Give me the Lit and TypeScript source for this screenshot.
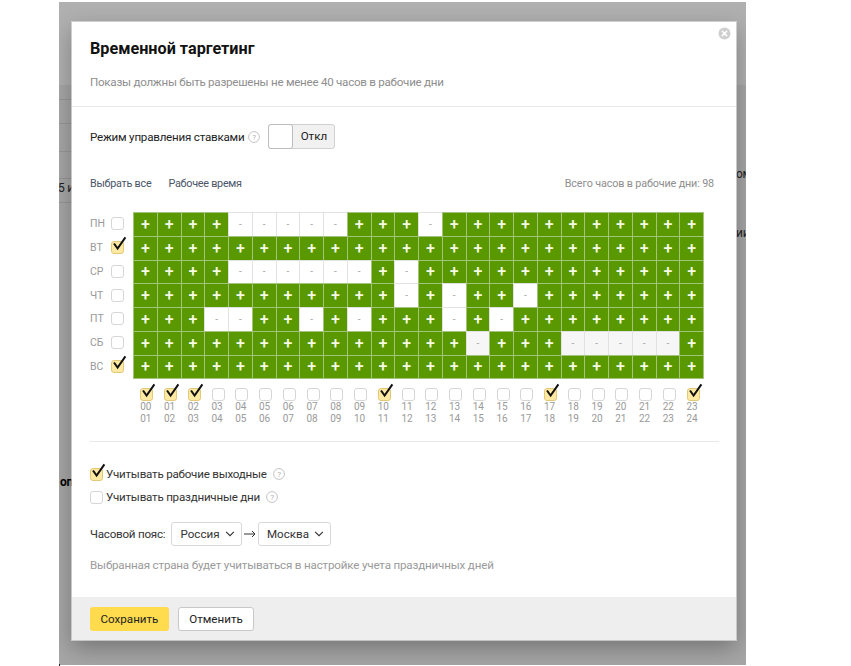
import { LitElement, css, html, svg } from 'lit'
import { customElement } from 'lit/decorators.js'

const DAYS = ['ПН', 'ВТ', 'СР', 'ЧТ', 'ПТ', 'СБ', 'ВС']
const CHECKED_DAYS = ['ВТ', 'ВС']
const CHECKED_HOURS = [0, 1, 2, 10, 17, 23]

// one string per day, 24 hours: + on, - off, o off on a weekend
const SCHEDULE = [
  '++++-----+++-+++++++++++',
  '++++++++++++++++++++++++',
  '++++------+-++++++++++++',
  '+++++++++++-+-++-+++++++',
  '+++--++-+-+++-+-++++++++',
  '++++++++++++++o+++ooooo+',
  '++++++++++++++++++++++++',
]

const pad = (n: number) => String(n).padStart(2, '0')

const tick = svg`<path d="M3 2.5 L6.6 7.6 L14.4 -3.6" fill="none" stroke="#111" stroke-width="2"/>`

@customElement('app-root')
export class AppRoot extends LitElement {
  static styles = css`
    :host {
      display: block;
      width: 851px;
      height: 666px;
      overflow: hidden;
      background: #fff;
      font-family: Roboto, sans-serif;
      font-size: 11.6px;
      letter-spacing: -0.22px;
      color: #222;
    }
    .backdrop {
      position: relative;
      box-sizing: border-box;
      width: 687px;
      height: 663px;
      margin: 2px 0 0 59px;
      padding: 20px 0 0 13px;
      overflow: hidden;
      background: linear-gradient(#b0b0b0 83px, #a6a6a6 83px);
    }
    .line {
      position: absolute;
      left: 0;
      width: 13px;
      height: 1px;
      background: #969696;
    }
    .peek {
      position: absolute;
      color: #222;
      font-size: 12px;
      line-height: 14px;
      white-space: nowrap;
    }
    .peek.bold {
      font-weight: 700;
      color: #000;
    }
    .dot {
      position: absolute;
      left: 59px;
      top: 664px;
      width: 1px;
      height: 2px;
      background: #222;
    }
    .modal {
      position: relative;
      box-sizing: border-box;
      width: 664px;
      height: 618px;
      display: flex;
      flex-direction: column;
      background: #fff;
      box-shadow: 0 0 0 1px rgba(225, 225, 225, 0.7), 0 8px 22px rgba(0, 0, 0, 0.3);
    }
    .close {
      position: absolute;
      top: 5px;
      right: 5px;
      width: 13px;
      height: 13px;
    }
    .head {
      height: 85px;
      box-sizing: border-box;
      padding: 16px 18px 0;
      border-bottom: 1px solid #e8e8e8;
    }
    h1 {
      margin: 0;
      font-size: 16.2px;
      line-height: 22px;
      font-weight: 700;
      letter-spacing: 0;
      color: #111;
    }
    .sub {
      margin-top: 14px;
      line-height: 16px;
      letter-spacing: -0.26px;
      color: #8e8e8e;
    }
    .body {
      flex: 1;
      padding: 17px 17px 0 18px;
    }
    .mode {
      display: flex;
      align-items: center;
      height: 25px;
    }
    .help {
      flex: none;
      width: 12px;
      height: 12px;
      margin-left: 4px;
    }
    .toggle {
      display: flex;
      width: 67px;
      height: 25px;
      margin-left: 8px;
      box-sizing: border-box;
      border: 1px solid #d0d0d0;
      border-radius: 3px;
      background: #f1f1f1;
      letter-spacing: 0;
    }
    .knob {
      width: 23px;
      margin: -1px 0 -1px -1px;
      border: 1px solid #bdbdbd;
      border-radius: 3px;
      background: #fff;
    }
    .toggle span {
      flex: 1;
      text-align: center;
      line-height: 23px;
    }
    .links {
      display: flex;
      gap: 17px;
      margin-top: 26px;
      height: 18px;
      font-size: 10.8px;
      letter-spacing: -0.25px;
      line-height: 18px;
      color: #4a5568;
    }
    .total {
      margin-left: auto;
      margin-right: 5px;
      letter-spacing: -0.15px;
      color: #8e8e8e;
    }
    .table {
      display: grid;
      grid-template-columns: 43px repeat(24, 23.75px);
      margin-top: 19px;
      letter-spacing: 0;
    }
    .day {
      display: flex;
      align-items: center;
      justify-content: space-between;
      padding-right: 9px;
      font-size: 10.5px;
      color: #9a9a9a;
    }
    .cell {
      box-sizing: border-box;
      height: 24.75px;
      display: flex;
      align-items: center;
      justify-content: center;
      border: 1px solid #e2e2e2;
      margin: 0 -1px -1px 0;
      font-size: 10px;
      color: #a8a8a8;
      background: #fff;
    }
    .cell.on {
      background: #5a9800;
      border-color: #a3c47a;
      color: #f6fbe6;
      font-size: 16px;
      font-weight: 500;
    }
    .cell.rest {
      background: #f6f6f6;
    }
    .hour {
      display: flex;
      flex-direction: column;
      align-items: center;
      padding: 10px 0 0 2px;
      font-size: 10px;
      line-height: 11.7px;
      color: #9a9a9a;
    }
    .hour .box {
      margin-left: 2px;
    }
    .box {
      flex: none;
      position: relative;
      box-sizing: border-box;
      display: block;
      width: 13px;
      height: 13px;
      border: 1px solid #d6d6d6;
      border-radius: 3px;
      background: #fff;
    }
    .box.checked {
      background: #ffe9a3;
      border-color: #e3c878;
    }
    .box svg {
      position: absolute;
      left: -1px;
      top: -1px;
      width: 13px;
      height: 13px;
      overflow: visible;
    }
    hr {
      margin: 16px 0 0;
      border: 0;
      border-top: 1px solid #e8e8e8;
    }
    .opts {
      display: flex;
      flex-direction: column;
      gap: 6px;
      margin-top: 24px;
    }
    .opt {
      display: flex;
      align-items: center;
      gap: 3px;
      height: 17px;
      line-height: 17px;
      color: #333;
    }
    .opt .help {
      margin-left: 3px;
    }
    .zone {
      display: flex;
      align-items: center;
      height: 24px;
      margin-top: 16px;
      color: #333;
    }
    .zone-label {
      width: 81px;
      white-space: nowrap;
    }
    .select {
      display: flex;
      align-items: center;
      justify-content: center;
      gap: 5px;
      box-sizing: border-box;
      height: 24px;
      padding-left: 2px;
      border: 1px solid #d8d8d8;
      border-radius: 3px;
      background: #fff;
      letter-spacing: 0;
    }
    .select svg {
      width: 10px;
      height: 6px;
    }
    .zone .arrow {
      width: 12px;
      height: 8px;
      margin: 0 2px;
    }
    .hint {
      margin-top: 11px;
      line-height: 16px;
      letter-spacing: -0.17px;
      color: #9a9a9a;
    }
    .foot {
      height: 43px;
      box-sizing: border-box;
      display: flex;
      align-items: center;
      gap: 9px;
      padding: 0 18px;
      background: #eeeeee;
    }
    button {
      height: 24px;
      padding: 0;
      box-sizing: border-box;
      border-radius: 3px;
      font: inherit;
      letter-spacing: 0;
      color: #222;
    }
    .save {
      width: 79px;
      border: 0;
      background: #ffdb4d;
    }
    .cancel {
      width: 76px;
      border: 1px solid #c8c8c8;
      background: #fff;
    }
  `

  private box(checked: boolean) {
    return html`<span class="box ${checked ? 'checked' : ''}">
      ${checked ? html`<svg viewBox="0 0 13 13">${tick}</svg>` : ''}
    </span>`
  }

  private help() {
    return html`<svg class="help" viewBox="0 0 12 12">
      <circle cx="6" cy="6" r="5.4" fill="none" stroke="#c4c4c4" />
      <text x="6" y="8.8" text-anchor="middle" font-size="8" fill="#b0b0b0">?</text>
    </svg>`
  }

  private chevron() {
    return html`<svg viewBox="0 0 11 7"><path d="M1 1 L5.5 5.5 L10 1" fill="none" stroke="#333" stroke-width="1.3" /></svg>`
  }

  protected render() {
    return html`
      <div class="backdrop">
        ${[97, 121, 149, 176, 200].map(y => html`<div class="line" style="top:${y}px"></div>`)}
        <span class="peek" style="left:-1px;top:179px">5 и</span>
        <span class="peek bold" style="left:1px;top:473px">оп</span>
        <span class="peek" style="left:677px;top:165px">ом</span>
        <span class="peek" style="left:677px;top:224px">ии</span>
        <div class="modal">
          <svg class="close" viewBox="0 0 13 13">
            <circle cx="6.5" cy="6.5" r="6" fill="#cfcfcf" />
            <path d="M4 4 L9 9 M9 4 L4 9" stroke="#fff" stroke-width="1.6" />
          </svg>
          <div class="head">
            <h1>Временной таргетинг</h1>
            <div class="sub">Показы должны быть разрешены не менее 40 часов в рабочие дни</div>
          </div>
          <div class="body">
            <div class="mode">
              Режим управления ставками ${this.help()}
              <div class="toggle"><div class="knob"></div><span>Откл</span></div>
            </div>
            <div class="links">
              <span>Выбрать все</span>
              <span>Рабочее время</span>
              <span class="total">Всего часов в рабочие дни: 98</span>
            </div>
            <div class="table">
              ${DAYS.map((day, d) => html`
                <div class="day">${day} ${this.box(CHECKED_DAYS.includes(day))}</div>
                ${[...SCHEDULE[d]].map(c => c === '+'
                  ? html`<div class="cell on">+</div>`
                  : html`<div class="cell ${c === 'o' ? 'rest' : ''}">-</div>`)}
              `)}
              <div></div>
              ${Array.from({ length: 24 }, (_, h) => html`
                <div class="hour">
                  ${this.box(CHECKED_HOURS.includes(h))}
                  <span>${pad(h)}</span>
                  <span>${pad(h + 1)}</span>
                </div>
              `)}
            </div>
            <hr />
            <div class="opts">
              <div class="opt">${this.box(true)} Учитывать рабочие выходные ${this.help()}</div>
              <div class="opt">${this.box(false)} Учитывать праздничные дни ${this.help()}</div>
            </div>
            <div class="zone">
              <span class="zone-label">Часовой пояс:</span>
              <div class="select" style="width:71px">Россия ${this.chevron()}</div>
              <svg class="arrow" viewBox="0 0 12 8"><path d="M0 4 H11 M8 1 L11 4 L8 7" fill="none" stroke="#333" /></svg>
              <div class="select" style="width:73px">Москва ${this.chevron()}</div>
            </div>
            <div class="hint">Выбранная страна будет учитываться в настройке учета праздничных дней</div>
          </div>
          <div class="foot">
            <button class="save">Сохранить</button>
            <button class="cancel">Отменить</button>
          </div>
        </div>
      </div>
      <div class="dot"></div>
    `
  }
}

declare global {
  interface HTMLElementTagNameMap {
    'app-root': AppRoot
  }
}
